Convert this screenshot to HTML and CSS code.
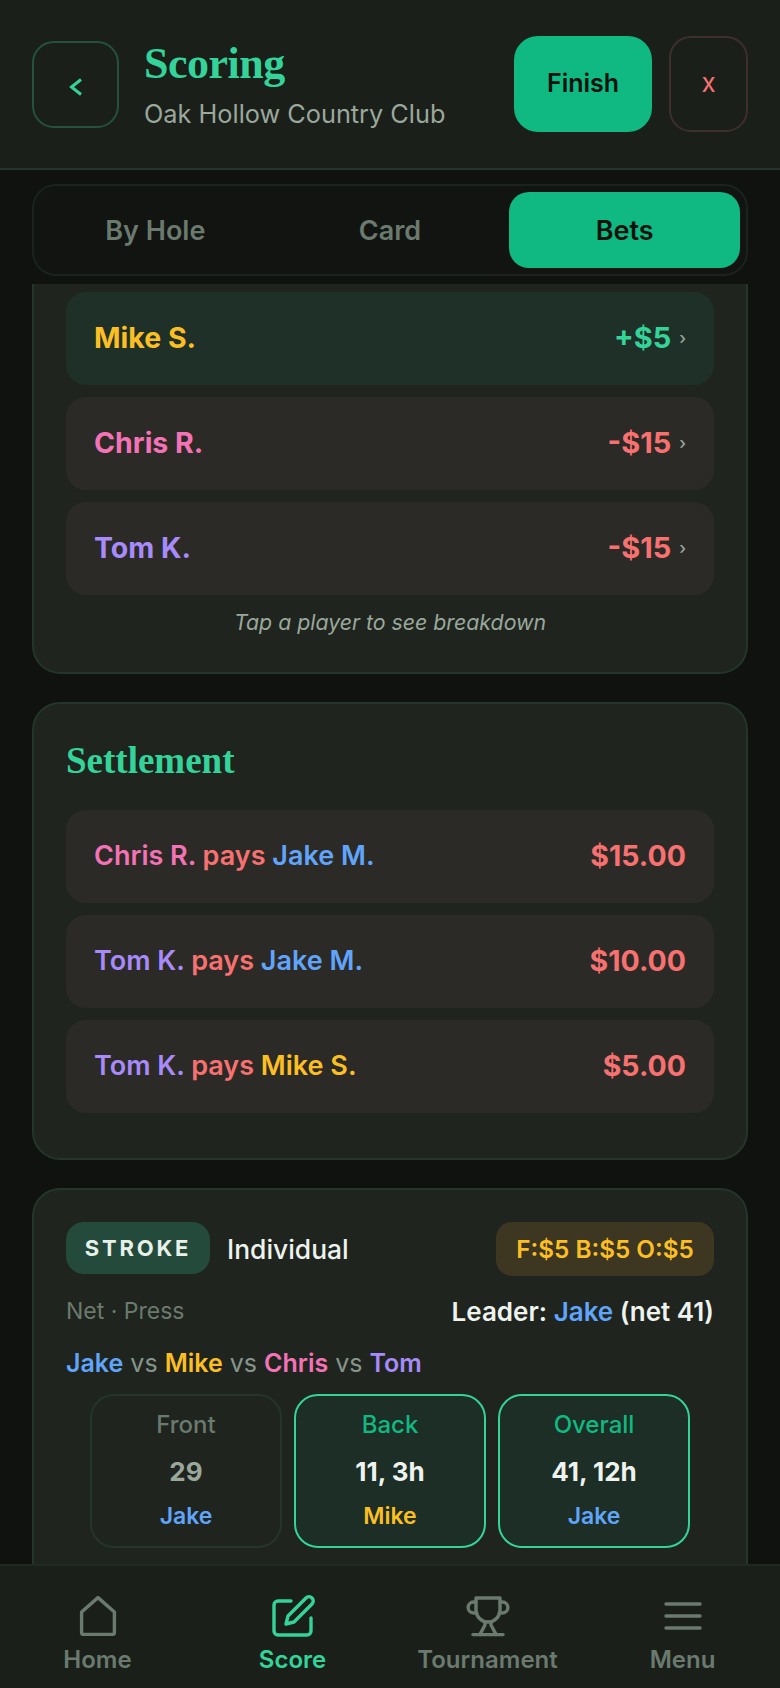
FILE: index.html
```html
<!DOCTYPE html>
<html lang="en">
<head>
  <meta charset="UTF-8" />
  <meta name="viewport" content="width=device-width, initial-scale=1.0" />
  <title>Scoring</title>
  <link rel="stylesheet" href="styles.css">
</head>
<body>
  <div class="app">
    <header class="topbar">
      <button class="back-btn">
        <svg viewBox="0 0 24 24" width="24" height="24"><path d="M17 4.500 L7.500 12 L17 19.500"/></svg>
      </button>
      <div class="title-block">
        <h1>Scoring</h1>
        <p>Oak Hollow Country Club</p>
      </div>
      <button class="finish-btn">Finish</button>
      <button class="close-btn">x</button>
    </header>

    <div class="tabs-wrap">
      <div class="tabs">
        <div class="tab">By Hole</div>
        <div class="tab">Card</div>
        <div class="tab active">Bets</div>
      </div>
    </div>

    <main class="content">
      <section class="card card-clipped">
        <div class="rows">
          <div class="row row-win">
            <span class="player mike">Mike S.</span>
            <span class="amount"><span class="up">+$5</span><span class="chev">›</span></span>
          </div>
          <div class="row">
            <span class="player chris">Chris R.</span>
            <span class="amount"><span class="down">-$15</span><span class="chev">›</span></span>
          </div>
          <div class="row">
            <span class="player tom">Tom K.</span>
            <span class="amount"><span class="down">-$15</span><span class="chev">›</span></span>
          </div>
        </div>
        <p class="hint">Tap a player to see breakdown</p>
      </section>

      <section class="card card-settle">
        <h2>Settlement</h2>
        <div class="rows">
          <div class="row">
            <span class="pay"><span class="chris">Chris R.</span> <span class="down">pays</span> <span class="jake">Jake M.</span></span>
            <span class="total">$15.00</span>
          </div>
          <div class="row">
            <span class="pay"><span class="tom">Tom K.</span> <span class="down">pays</span> <span class="jake">Jake M.</span></span>
            <span class="total">$10.00</span>
          </div>
          <div class="row">
            <span class="pay"><span class="tom">Tom K.</span> <span class="down">pays</span> <span class="mike">Mike S.</span></span>
            <span class="total">$5.00</span>
          </div>
        </div>
      </section>

      <section class="card card-bet">
        <div class="bet-head">
          <span class="badge">STROKE</span>
          <span class="bet-kind">Individual</span>
          <span class="stakes">F:$5 B:$5 O:$5</span>
        </div>
        <div class="bet-meta">
          <span class="bet-opts">Net · Press</span>
          <span class="leader">Leader: <span class="jake">Jake</span> (net 41)</span>
        </div>
        <div class="bet-players">
          <span class="jake">Jake</span> vs <span class="mike">Mike</span> vs <span class="chris">Chris</span> vs <span class="tom">Tom</span>
        </div>
        <div class="segments">
          <div class="segment">
            <div class="seg-label">Front</div>
            <div class="seg-value">29</div>
            <div class="seg-name jake">Jake</div>
          </div>
          <div class="segment done">
            <div class="seg-label">Back</div>
            <div class="seg-value">11, 3h</div>
            <div class="seg-name mike">Mike</div>
          </div>
          <div class="segment done">
            <div class="seg-label">Overall</div>
            <div class="seg-value">41, 12h</div>
            <div class="seg-name jake">Jake</div>
          </div>
        </div>
      </section>
    </main>

    <nav class="bottom-nav">
      <div class="nav-item">
        <svg viewBox="0 0 24 24" width="48" height="48"><path d="M3.800 10 L12 2.800 L20.200 10 V20.200 a1 1 0 0 1 -1 1 H4.800 a1 1 0 0 1 -1 -1 Z"/></svg>
        <span>Home</span>
      </div>
      <div class="nav-item active">
        <svg viewBox="0 0 24 24" width="48" height="48"><path d="M11 4.500 H4.500 a2 2 0 0 0 -2 2 V19.500 a2 2 0 0 0 2 2 H19 a2 2 0 0 0 2 -2 V13"/><path d="M18.500 3 a2 2 0 0 1 3 3 L12.500 15 L8.500 16 L9.500 12 Z"/></svg>
        <span>Score</span>
      </div>
      <div class="nav-item">
        <svg viewBox="0 0 24 24" width="48" height="48"><path d="M6 3 H18 V9 a6 6 0 0 1 -12 0 Z"/><path d="M6 5 H4.800 a2.500 2.500 0 0 0 0 5.500 H6.400"/><path d="M18 5 H19.200 a2.500 2.500 0 0 1 0 5.500 H17.600"/><path d="M10.500 15 V16.500 L8 21.200"/><path d="M13.500 15 V16.500 L16 21.200"/><path d="M4.500 21.300 H19.500"/></svg>
        <span>Tournament</span>
      </div>
      <div class="nav-item">
        <svg viewBox="0 0 24 24" width="48" height="48"><path d="M3.500 6 H20.500"/><path d="M3.500 12 H20.500"/><path d="M3.500 18 H20.500"/></svg>
        <span>Menu</span>
      </div>
    </nav>
  </div>
</body>
</html>
```

FILE: styles.css
```css
* {
  box-sizing: border-box;
}
body {
  margin: 0;
  background: #0f120f;
  font-family: 'Inter', 'Noto Sans', sans-serif;
  color: #eef3ee;
  overflow: hidden;
}
button {
  font-family: inherit;
  cursor: pointer;
  padding: 0;
}
.app {
  display: flex;
  flex-direction: column;
  height: 1688px;
  overflow: hidden;
}

/* top bar */
.topbar {
  display: flex;
  align-items: center;
  height: 170px;
  padding: 0 32px;
  background: #1a1f1a;
  border-bottom: 2px solid #24352b;
}
.back-btn {
  width: 87px;
  height: 87px;
  display: flex;
  align-items: center;
  justify-content: center;
  background: transparent;
  border: 2px solid #24523f;
  border-radius: 22px;
}
.back-btn svg {
  margin-top: 5px;
  fill: none;
  stroke: #34d399;
  stroke-width: 3;
}
.title-block {
  flex: 1;
  margin-left: 25px;
}
.title-block h1 {
  margin: -1px 0 0;
  font-family: 'Liberation Serif', serif;
  font-size: 44px;
  line-height: 52px;
  font-weight: 700;
  letter-spacing: -0.5px;
  color: #34d399;
}
.title-block p {
  margin: 8px 0 0;
  font-size: 25.3px;
  line-height: 32px;
  color: #9aa89c;
}
.finish-btn {
  width: 138px;
  height: 96px;
  background: #10b981;
  border: none;
  border-radius: 24px;
  font-size: 25px;
  font-weight: 600;
  color: #0a120e;
  padding-bottom: 2px;
}
.close-btn {
  width: 79px;
  height: 96px;
  margin-left: 17px;
  padding-bottom: 4px;
  background: transparent;
  border: 2px solid #3d2f2c;
  border-radius: 22px;
  font-size: 26px;
  color: #f87171;
}

/* tabs */
.tabs-wrap {
  padding: 14px 32px 8px;
}
.tabs {
  display: grid;
  grid-template-columns: repeat(3, 1fr);
  height: 92px;
  padding: 6px;
  gap: 4px;
  background: #111411;
  border: 2px solid #1a231d;
  border-radius: 24px;
}
.tab {
  display: flex;
  align-items: center;
  justify-content: center;
  border-radius: 20px;
  font-size: 27px;
  font-weight: 600;
  color: #6b7a6e;
}
.tab.active {
  background: #10b981;
  color: #0a120e;
}

/* scrolling content */
.content {
  flex: 1;
  min-height: 0;
  overflow: hidden;
  padding: 0 32px;
}
.card {
  background: #1f241f;
  border: 2px solid #24352b;
  border-radius: 28px;
  padding: 32px;
  margin-bottom: 28px;
}
.card-clipped {
  border-top: none;
  border-radius: 0 0 28px 28px;
  padding-top: 8px;
  padding-bottom: 0;
  height: 390px;
}
.card-settle {
  height: 458px;
}
.card-settle h2 {
  margin: 0 0 24px;
  font-family: 'Liberation Serif', serif;
  font-size: 37px;
  line-height: 50px;
  font-weight: 700;
  color: #34d399;
}
.rows {
  display: flex;
  flex-direction: column;
  gap: 12px;
}
.row {
  display: flex;
  align-items: center;
  justify-content: space-between;
  height: 93px;
  padding: 0 28px 2px;
  background: #2c2a26;
  border-radius: 20px;
}
.row-win {
  background: #1f3028;
}
.player {
  font-size: 28.500px;
  font-weight: 700;
}
.amount {
  display: flex;
  align-items: center;
  gap: 8px;
  font-size: 29px;
  font-weight: 700;
}
.chev {
  font-size: 17px;
  font-weight: 500;
  color: #9aa89c;
}
.hint {
  margin: 13px 0 0;
  text-align: center;
  font-size: 21.3px;
  line-height: 28px;
  font-style: italic;
  color: #9aa89c;
}
.pay {
  font-size: 27px;
  font-weight: 600;
}
.total {
  font-size: 28.500px;
  font-weight: 700;
  color: #f87171;
}
.up { color: #34d399; }
.down { color: #f87171; }
.jake { color: #60a5fa; }
.mike { color: #fbbf24; }
.chris { color: #f472b6; }
.tom { color: #a78bfa; }

/* bet card */
.card-bet {
  height: 500px;
}
.bet-head {
  display: flex;
  align-items: flex-start;
}
.badge {
  width: 144px;
  height: 52px;
  display: flex;
  align-items: center;
  justify-content: center;
  background: #234a3a;
  border-radius: 18px;
  font-size: 22px;
  font-weight: 700;
  letter-spacing: 2.8px;
  color: #e8f0ea;
}
.bet-kind {
  flex: 1;
  margin-left: 17px;
  font-size: 26.4px;
  line-height: 54px;
  font-weight: 500;
}
.stakes {
  width: 218px;
  height: 54px;
  display: flex;
  align-items: center;
  justify-content: center;
  background: #3d3722;
  border-radius: 16px;
  font-size: 24.3px;
  font-weight: 600;
  color: #fbbf24;
}
.bet-meta {
  display: flex;
  align-items: center;
  justify-content: space-between;
  margin-top: 19px;
  height: 32px;
}
.bet-opts {
  font-size: 23px;
  color: #6b7a6e;
}
.leader {
  font-size: 26px;
  font-weight: 600;
}
.bet-players {
  margin-top: 20px;
  font-size: 25px;
  line-height: 32px;
  color: #86948a;
}
.bet-players span {
  font-weight: 600;
}
.segments {
  display: flex;
  justify-content: center;
  gap: 12px;
  margin-top: 15px;
}
.segment {
  width: 192px;
  height: 154px;
  padding-top: 14px;
  text-align: center;
  border: 2px solid #24352b;
  border-radius: 24px;
}
.segment.done {
  background: #1c2e25;
  border-color: #34d399;
}
.seg-label {
  font-size: 24px;
  line-height: 30px;
  font-weight: 500;
  color: #6b7a6e;
}
.done .seg-label {
  color: #10b981;
}
.seg-value {
  margin-top: 16px;
  font-size: 26px;
  line-height: 32px;
  font-weight: 700;
  color: #9aa89c;
}
.done .seg-value {
  color: #eef3ee;
}
.seg-name {
  margin-top: 13px;
  font-size: 23px;
  line-height: 30px;
  font-weight: 600;
}

/* bottom nav */
.bottom-nav {
  display: grid;
  grid-template-columns: repeat(4, 1fr);
  height: 124px;
  padding-top: 26px;
  background: #1a1f1a;
  border-top: 2px solid #1f2a23;
}
.nav-item {
  display: flex;
  flex-direction: column;
  align-items: center;
  font-size: 24px;
  font-weight: 600;
  color: #6b7a6e;
}
.nav-item svg {
  fill: none;
  stroke: currentColor;
  stroke-width: 1.7;
  stroke-linecap: round;
  stroke-linejoin: round;
}
.nav-item span {
  margin-top: 5px;
  line-height: 30px;
}
.nav-item.active {
  color: #34d399;
}
```
